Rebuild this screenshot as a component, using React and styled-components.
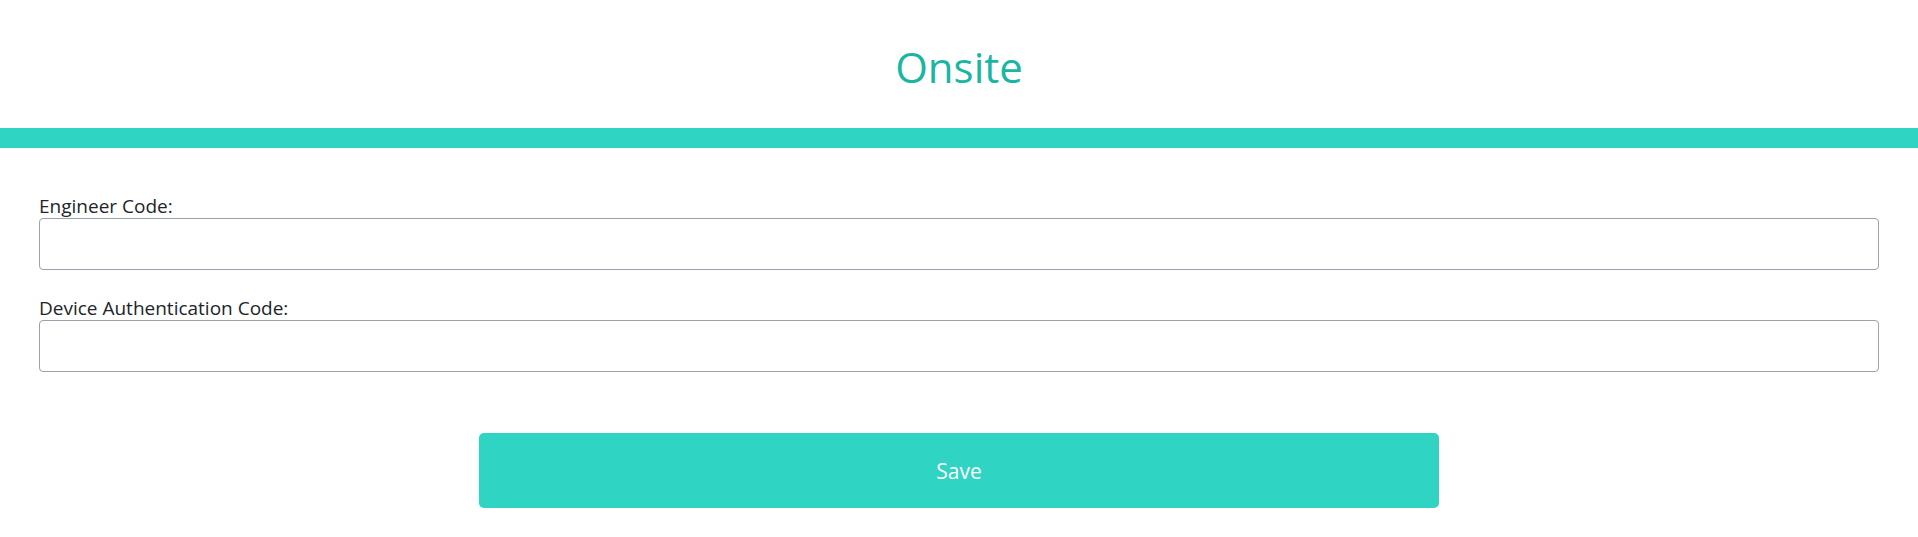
import React from "react";
import styled, { createGlobalStyle } from "styled-components";

const GlobalStyle = createGlobalStyle`
  body {
    margin: 0;
    background: #ffffff;
    font-family: 'Open Sans', 'Noto Sans', sans-serif;
  }
`;

const Header = styled.header`
  height: 128px;
  display: flex;
  align-items: center;
  justify-content: center;
`;

const Title = styled.h1`
  margin: 0;
  padding-top: 4px;
  font-size: 42px;
  font-weight: 400;
  color: #1bb5a3;
`;

const Stripe = styled.div`
  height: 20px;
  background: #2fd5c2;
`;

const Form = styled.form`
  display: flex;
  flex-direction: column;
  padding: 46px 39px 0;
`;

const Field = styled.div`
  display: flex;
  flex-direction: column;
  margin-bottom: ${props => props.$gap || 0}px;
`;

const Label = styled.label`
  font-size: 19px;
  line-height: 24px;
  color: #212529;
`;

const Input = styled.input`
  box-sizing: border-box;
  height: 52px;
  width: 100%;
  border: 1px solid #9ca1ae;
  border-radius: 4px;
  padding: 0 12px;
  font-size: 18px;
  font-family: inherit;
  outline: none;
`;

const SaveButton = styled.button`
  align-self: center;
  width: 960px;
  height: 75px;
  margin-top: 61px;
  border: none;
  border-radius: 5px;
  background: #2fd5c2;
  color: #ffffff;
  font-family: inherit;
  font-size: 21px;
  cursor: pointer;
`;

const App = () => {
  return (
    <>
      <GlobalStyle />
      <Header>
        <Title>Onsite</Title>
      </Header>
      <Stripe />
      <Form onSubmit={e => e.preventDefault()}>
        <Field $gap={26}>
          <Label htmlFor="engineer">Engineer Code:</Label>
          <Input id="engineer" type="text" />
        </Field>
        <Field>
          <Label htmlFor="device">Device Authentication Code:</Label>
          <Input id="device" type="text" />
        </Field>
        <SaveButton type="submit">Save</SaveButton>
      </Form>
    </>
  );
};

export default App;
